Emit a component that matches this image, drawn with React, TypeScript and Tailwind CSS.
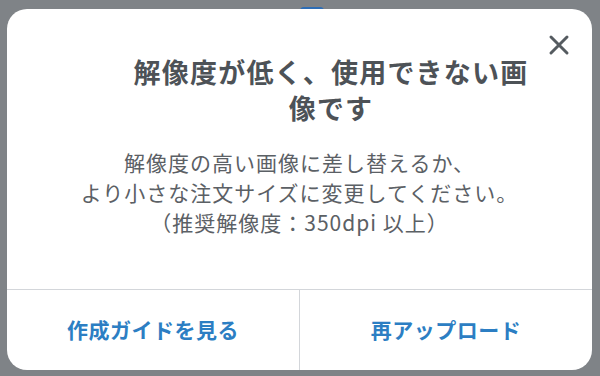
export default function App() {
  return (
    <div
      className="relative w-[600px] h-[376px] bg-[#7f8387] pt-[9px] pl-[7px] overflow-hidden"
      style={{ fontFamily: '"Noto Sans CJK JP", "Noto Sans", sans-serif' }}
    >
      {/* blue thing behind the dialog, peeking out at the top */}
      <div className="absolute left-[300px] top-[7px] w-[24px] h-[8px] rounded-full bg-[#2d6db5]" />

      <div className="relative flex flex-col w-[585px] h-[361px] bg-white rounded-[20px] overflow-hidden">
        <button className="absolute top-[25px] right-[22px] w-[22px] h-[22px] text-[#555b60]" aria-label="閉じる">
          <svg viewBox="0 0 22 22" className="w-full h-full" fill="none" stroke="currentColor" strokeWidth="3" strokeLinecap="round">
            <path d="M3 3L19 19M19 3L3 19" />
          </svg>
        </button>

        <h2 className="mt-[45px] ml-[121px] mr-[58px] text-center text-[27px] leading-[36px] tracking-[1.2px] font-bold text-[#4d5257]">
          解像度が低く、使用できない画像です
        </h2>

        <p className="mt-[21px] text-center text-[21px] leading-[30px] tracking-[1px] text-[#5b6065]">
          解像度の高い画像に差し替えるか、
          <br />
          より小さな注文サイズに変更してください。
          <br />
          （推奨解像度：350dpi 以上）
        </p>

        <div className="flex-1" />

        <div className="flex h-[81px] border-t border-[#d3d6da]">
          <button className="flex-1 flex items-center justify-center text-[21px] tracking-[0.5px] font-bold text-[#2c7ec3]">
            作成ガイドを見る
          </button>
          <div className="w-px bg-[#d3d6da]" />
          <button className="flex-1 flex items-center justify-center text-[21px] tracking-[0.5px] font-bold text-[#2c7ec3]">
            再アップロード
          </button>
        </div>
      </div>
    </div>
  )
}
